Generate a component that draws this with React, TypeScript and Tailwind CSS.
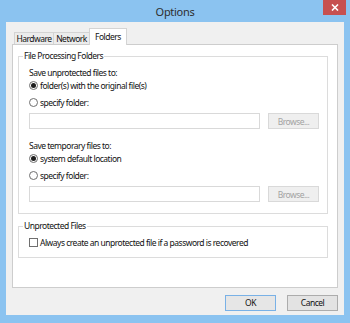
import React from 'react';

const Radio: React.FC<{ checked?: boolean }> = ({ checked }) => (
  <span className="w-[9px] h-[9px] rounded-full border border-[#6f6f6f] bg-white flex items-center justify-center shrink-0">
    {checked && <span className="w-[5px] h-[5px] rounded-full bg-[#1e1e1e]" />}
  </span>
);

const RadioRow: React.FC<{ checked?: boolean; label: string; className?: string }> = ({ checked, label, className }) => (
  <div className={`flex items-center gap-[2px] h-[13px] ${className ?? ''}`}>
    <Radio checked={checked} />
    <span>{label}</span>
  </div>
);

const FolderInput: React.FC = () => (
  <div className="flex gap-[8px] mt-[4px] h-[16px]">
    <div className="flex-1 border border-[#d9d9d9] bg-white" />
    <div className="w-[51px] border border-[#d9d9d9] bg-[#efefef] text-[#a3a3a3] flex items-center justify-center">
      Browse...
    </div>
  </div>
);

const App: React.FC = () => {
  return (
    <div className="w-[350px] h-[323px] bg-[#8bc3f0] flex flex-col font-['Noto_Sans',sans-serif] text-[8.5px] tracking-[-0.5px] leading-[13px] text-[#111]">
      {/* title bar */}
      <div className="h-[22px] relative flex items-center justify-center">
        <span className="text-[11px] tracking-[-0.3px] text-[#2e2e2e]">Options</span>
        <div className="absolute right-[4px] top-0 w-[23px] h-[15px] bg-[#c75050] flex items-center justify-center">
          <svg width="8" height="7" viewBox="0 0 8 7">
            <path d="M1 0.5 L7 6.5 M7 0.5 L1 6.5" stroke="white" strokeWidth="1.6" />
          </svg>
        </div>
      </div>

      {/* client */}
      <div className="mx-[6px] h-[293px] bg-[#f0f0f0] flex flex-col px-[6px] pt-[6px]">
        <div className="flex items-end h-[16px] pl-[2px]">
          <div className="w-[40px] h-[12px] border border-b-0 border-[#d4d4d4] bg-[#ececec] flex items-center justify-center">
            Hardware
          </div>
          <div className="w-[36px] h-[12px] border border-l-0 border-b-0 border-[#d4d4d4] bg-[#ececec] flex items-center justify-center">
            Network
          </div>
          <div className="w-[38px] h-[17px] -ml-px -mb-px relative z-10 border border-b-0 border-[#d4d4d4] bg-white flex items-center justify-center pb-[2px]">
            Folders
          </div>
        </div>

        <div className="h-[244px] border border-[#cdcdcd] bg-white pt-[5px] pl-[5px] pr-[9px]">
          <fieldset className="border border-[#dcdcdc] min-w-0">
            <legend className="ml-[4px] px-[1px] leading-[12px]">File Processing Folders</legend>
            <div className="pl-[10px] pr-[8px] pt-[4px] pb-[11px]">
              <div className="h-[13px]">Save unprotected files to:</div>
              <RadioRow checked label="folder(s) with the original file(s)" />
              <RadioRow label="specify folder:" className="mt-[4px]" />
              <FolderInput />
              <div className="h-[13px] mt-[10px]">Save temporary files to:</div>
              <RadioRow checked label="system default location" />
              <RadioRow label="specify folder:" className="mt-[4px]" />
              <FolderInput />
            </div>
          </fieldset>

          <fieldset className="border border-[#dcdcdc] min-w-0 mt-[6px]">
            <legend className="ml-[4px] px-[1px] leading-[12px]">Unprotected Files</legend>
            <div className="pl-[10px] pr-[8px] pt-[4px] pb-[8px]">
              <div className="flex items-center gap-[2px] h-[13px]">
                <span className="w-[9px] h-[9px] border border-[#6f6f6f] bg-white shrink-0" />
                <span>Always create an unprotected file if a password is recovered</span>
              </div>
            </div>
          </fieldset>
        </div>

        <div className="flex justify-end gap-[11px] mt-[7px]">
          <button className="w-[51px] h-[16px] border border-[#79b1e6] bg-[#e6e6e6] flex items-center justify-center leading-none">
            OK
          </button>
          <button className="w-[51px] h-[16px] border border-[#acacac] bg-[#e3e3e3] flex items-center justify-center leading-none">
            Cancel
          </button>
        </div>
      </div>
    </div>
  );
};

export default App;
